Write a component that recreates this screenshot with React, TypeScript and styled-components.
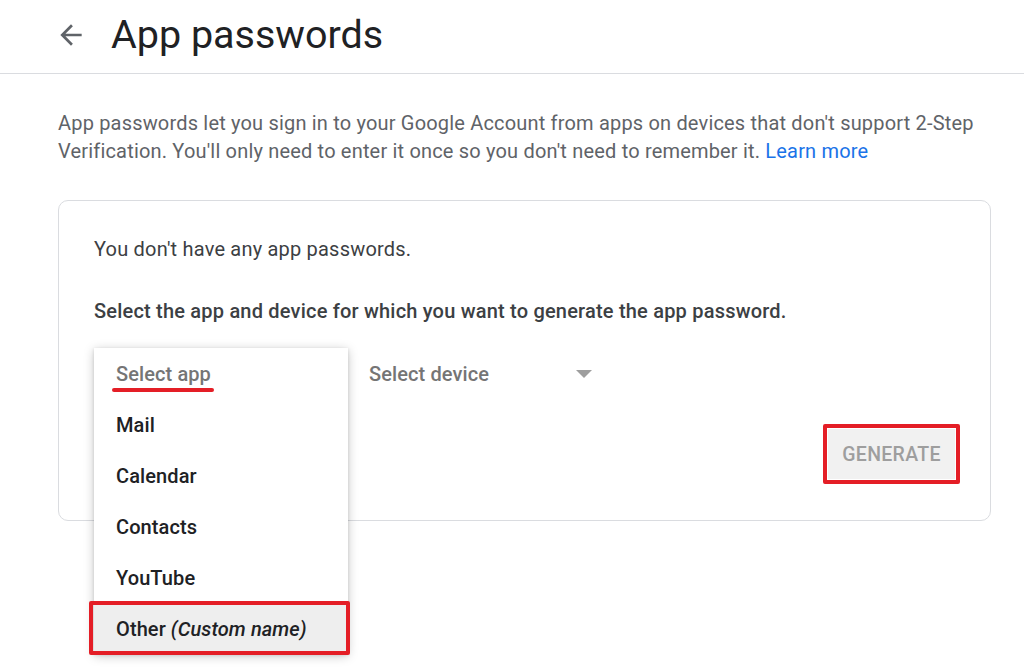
import React from "react";
import styled, { createGlobalStyle } from "styled-components";

const GlobalStyle = createGlobalStyle`
  html, body { margin: 0; padding: 0; background: #ffffff; }
  body { font-family: Roboto, "Liberation Sans", Arial, sans-serif; -webkit-font-smoothing: antialiased; }
  * { box-sizing: border-box; }
`;

const Page = styled.div`
  width: 1024px;
  height: 668px;
  overflow: hidden;
  background: #fff;
`;

const Header = styled.header`
  height: 74px;
  display: flex;
  align-items: center;
  padding-left: 55px;
  border-bottom: 1px solid #dadce0;
`;

const BackButton = styled.button`
  width: 32px;
  height: 32px;
  padding: 0;
  border: 0;
  background: transparent;
  display: flex;
  align-items: center;
  justify-content: center;
  color: #5f6368;
  margin-top: -4px;
`;

const Title = styled.h1`
  margin: -4px 0 0 24px;
  font-family: Roboto, "Liberation Sans", Arial, sans-serif;
  font-weight: 400;
  font-size: 39.5px;
  line-height: 44px;
  color: #202124;
`;

const Intro = styled.p`
  margin: 35px 20px 0 58px;
  font-size: 20px;
  letter-spacing: 0.18px;
  line-height: 28px;
  color: #5f6368;
`;

const Link = styled.a`
  color: #1a73e8;
  text-decoration: none;
`;

const Card = styled.section`
  margin: 35px 33px 0 58px;
  padding: 34px 35px 41px 35px;
  border: 1px solid #dadce0;
  border-radius: 10px;
`;

const Note = styled.div`
  font-size: 20px;
  letter-spacing: 0.2px;
  line-height: 28px;
  color: #3c4043;
`;

const Instruction = styled.div`
  margin-top: 34px;
  font-size: 20px;
  letter-spacing: 0.2px;
  line-height: 28px;
  font-weight: 500;
  color: #3c4043;
`;

const SelectRow = styled.div`
  margin-top: 23px;
  height: 51px;
  display: flex;
  align-items: center;
`;

const Field = styled.div<{ $width: number; $inset?: number }>`
  position: relative;
  width: ${(p) => p.$width}px;
  height: 51px;
  padding-left: ${(p) => p.$inset ?? 0}px;
  display: flex;
  align-items: center;
  justify-content: space-between;
  font-size: 20px;
  letter-spacing: 0.1px;
  font-weight: 500;
  color: #757575;
`;

const Caret = styled.span`
  width: 0;
  height: 0;
  border-left: 8px solid transparent;
  border-right: 8px solid transparent;
  border-top: 8px solid #9e9e9e;
  margin-right: 17px;
`;

const Menu = styled.ul`
  position: absolute;
  left: 0;
  top: 0;
  width: 254px;
  margin: 0;
  padding: 0;
  list-style: none;
  background: #fff;
  box-shadow: 0 2px 10px rgba(0, 0, 0, 0.22), 0 1px 3px rgba(0, 0, 0, 0.12);
  z-index: 5;
`;

const MenuItem = styled.li<{ $placeholder?: boolean; $highlight?: boolean }>`
  position: relative;
  height: 51px;
  display: flex;
  align-items: center;
  padding-left: 22px;
  font-size: 20px;
  letter-spacing: 0.1px;
  font-weight: 500;
  color: ${(p) => (p.$placeholder ? "#757575" : "#202124")};
  background: ${(p) => (p.$highlight ? "#eeeeee" : "#fff")};
  ${(p) =>
    p.$highlight &&
    `
    &::after {
      content: "";
      position: absolute;
      left: -5px;
      right: -2px;
      top: -2px;
      bottom: -1px;
      border: 4px solid #e41e26;
      border-radius: 2px;
    }
  `}
`;

const Underlined = styled.span`
  position: relative;
  &::after {
    content: "";
    position: absolute;
    left: -4px;
    right: -3px;
    bottom: -6px;
    height: 4px;
    border-radius: 2px;
    background: #e41e26;
  }
`;

const Hint = styled.i`
  font-style: italic;
  font-weight: 500;
  margin-left: 5px;
`;

const ButtonRow = styled.div`
  margin-top: 30px;
  display: flex;
  justify-content: flex-end;
`;

const GenerateButton = styled.button`
  position: relative;
  height: 50px;
  width: 127px;
  border: 0;
  background: #f1f1f1;
  color: #9e9e9e;
  font-family: Roboto, "Liberation Sans", Arial, sans-serif;
  font-size: 19.5px;
  font-weight: 500;
  letter-spacing: 0.3px;
  &::after {
    content: "";
    position: absolute;
    left: -5px;
    right: -5px;
    top: -5px;
    bottom: -5px;
    border: 4px solid #e41e26;
    border-radius: 2px;
  }
`;

const BackArrow = () => (
  <svg width="32" height="32" viewBox="0 0 24 24" fill="currentColor">
    <path d="M20 11H7.83l5.59-5.59L12 4l-8 8 8 8 1.41-1.41L7.83 13H20v-2z" />
  </svg>
);

export default function App() {
  const apps = ["Mail", "Calendar", "Contacts", "YouTube"];
  return (
    <Page>
      <GlobalStyle />
      <Header>
        <BackButton aria-label="Back">
          <BackArrow />
        </BackButton>
        <Title>App passwords</Title>
      </Header>
      <Intro>
        App passwords let you sign in to your Google Account from apps on devices that don't support 2-Step
        Verification. You'll only need to enter it once so you don't need to remember it.{" "}
        <Link href="#">Learn more</Link>
      </Intro>
      <Card>
        <Note>You don't have any app passwords.</Note>
        <Instruction>Select the app and device for which you want to generate the app password.</Instruction>
        <SelectRow>
          <Field $width={275} $inset={22}>
            <span>Select app</span>
            <Menu>
              <MenuItem $placeholder>
                <Underlined>Select app</Underlined>
              </MenuItem>
              {apps.map((a) => (
                <MenuItem key={a}>{a}</MenuItem>
              ))}
              <MenuItem $highlight>
                Other<Hint>(Custom name)</Hint>
              </MenuItem>
            </Menu>
          </Field>
          <Field $width={240}>
            <span>Select device</span>
            <Caret />
          </Field>
        </SelectRow>
        <ButtonRow>
          <GenerateButton>GENERATE</GenerateButton>
        </ButtonRow>
      </Card>
    </Page>
  );
}
